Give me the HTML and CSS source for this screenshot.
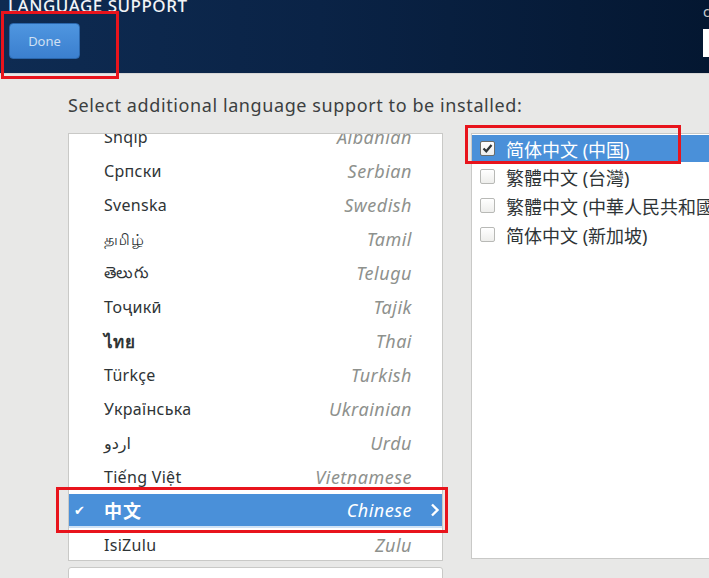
FILE: index.html
```html
<!DOCTYPE html>
<html lang="en">

<head>
    <meta charset="UTF-8">
    <title>Language Support</title>
    <link rel="stylesheet" href="styles.css">
</head>

<body>

    <header class="topbar">
        <div class="topbar-left">
            <h1 class="title">LANGUAGE SUPPORT</h1>
            <button class="done">Done</button>
        </div>
        <div class="topbar-right">
            <span class="layout-name">cn</span>
            <span class="layout-box">cn</span>
        </div>
        <div class="mark mark-done"></div>
    </header>

    <main class="content">
        <p class="lead">Select additional language support to be installed:</p>

        <div class="columns">
            <div class="left">
                <div class="langlist">
                    <div class="rows">
                        <div class="row"><span class="native">Shqip</span><span class="english">Albanian</span></div>
                        <div class="row"><span class="native">Српски</span><span class="english">Serbian</span></div>
                        <div class="row"><span class="native">Svenska</span><span class="english">Swedish</span></div>
                        <div class="row"><span class="native">தமிழ்</span><span class="english">Tamil</span></div>
                        <div class="row"><span class="native">తెలుగు</span><span class="english">Telugu</span></div>
                        <div class="row"><span class="native">Тоҷикӣ</span><span class="english">Tajik</span></div>
                        <div class="row"><span class="native thai">ไทย</span><span class="english">Thai</span></div>
                        <div class="row"><span class="native">Türkçe</span><span class="english">Turkish</span></div>
                        <div class="row"><span class="native">Українська</span><span class="english">Ukrainian</span></div>
                        <div class="row"><span class="native">اردو</span><span class="english">Urdu</span></div>
                        <div class="row"><span class="native">Tiếng Việt</span><span class="english">Vietnamese</span></div>
                        <div class="row selected">
                            <span class="tick">&#10004;</span>
                            <span class="native">中文</span><span class="english">Chinese</span>
                            <svg class="chevron" width="10" height="14" viewBox="0 0 10 14"><path d="M2 1.5 L7.5 7 L2 12.5" fill="none" stroke="#ffffff" stroke-width="2.4"/></svg>
                        </div>
                        <div class="row"><span class="native">IsiZulu</span><span class="english">Zulu</span></div>
                    </div>
                </div>
                <div class="search"></div>
            </div>

            <div class="localelist">
                <div class="locale chosen">
                    <span class="box checked">
                        <svg width="11" height="11" viewBox="0 0 11 11"><path d="M1.5 5.5 L4.3 8.3 L9.5 2" fill="none" stroke="#2e3436" stroke-width="2.2"/></svg>
                    </span>
                    <span class="locale-name">简体中文 (中国)</span>
                </div>
                <div class="locale"><span class="box"></span><span class="locale-name">繁體中文 (台灣)</span></div>
                <div class="locale"><span class="box"></span><span class="locale-name">繁體中文 (中華人民共和國香港特別行政區)</span></div>
                <div class="locale"><span class="box"></span><span class="locale-name">简体中文 (新加坡)</span></div>
            </div>

            <div class="mark mark-row"></div>
            <div class="mark mark-locale"></div>
        </div>
    </main>

</body></html>
```

FILE: styles.css
```css
html,
body {
    margin: 0;
    width: 709px;
    height: 578px;
    overflow: hidden;
}

body {
    background-color: #e8e8e7;
    font-family: "Noto Sans", "DejaVu Sans", "Noto Sans CJK SC", sans-serif;
    color: #2e3436;
}

.topbar {
    position: relative;
    display: flex;
    height: 74px;
    background: linear-gradient(90deg, #0e2b52 0%, #0a2346 45%, #041731 100%);
    border-bottom: 1px solid #d6d6d6;
    box-sizing: border-box;
}

.topbar-left {
    display: flex;
    flex-direction: column;
    align-items: flex-start;
    padding-left: 8px;
}

.title {
    margin: -5px 0 0 0;
    font-size: 17px;
    line-height: 22px;
    font-weight: 500;
    color: #f2f4f7;
    letter-spacing: 0.5px;
}

.done {
    margin: 6px 0 0 1px;
    width: 71px;
    height: 36px;
    border: 1px solid #2a66ac;
    border-radius: 4px;
    background: linear-gradient(#4f96e0, #3b7fcf);
    color: #cfe0f3;
    font-family: "Noto Sans", sans-serif;
    font-size: 13px;
    padding: 0;
}

.topbar-right {
    margin-left: auto;
    margin-right: -30px;
    width: 36px;
    display: flex;
    flex-direction: column;
    padding-top: 2px;
}

.layout-name {
    color: #c8ccd2;
    font-size: 14px;
    line-height: 20px;
}

.layout-box {
    margin-top: 7px;
    height: 28px;
    width: 30px;
    border: 2px solid #ffffff;
    background-color: #ffffff;
    color: #2e3436;
    font-size: 14px;
    line-height: 24px;
    box-sizing: border-box;
    padding-left: 4px;
}

.mark {
    position: absolute;
    border: 3px solid #e8141c;
    box-sizing: border-box;
    pointer-events: none;
}

.mark-done {
    left: 1px;
    top: 11px;
    width: 118px;
    height: 68px;
}

.content {
    padding: 19px 0 0 68px;
}

.lead {
    margin: 0 0 16px 0;
    font-size: 18px;
    line-height: 24px;
    letter-spacing: 0.6px;
    color: #3c3f41;
}

.columns {
    position: relative;
    display: flex;
    gap: 28px;
}

.left {
    display: flex;
    flex-direction: column;
    gap: 6px;
    width: 375px;
}

.langlist {
    height: 428px;
    background-color: #ffffff;
    border: 1px solid #c9c9c7;
    box-sizing: border-box;
    overflow: hidden;
}

.rows {
    margin-top: -14px;
}

.row {
    position: relative;
    display: flex;
    align-items: center;
    height: 34px;
    padding: 0 30px 0 35px;
}

.native {
    font-size: 16px;
    letter-spacing: 0.3px;
    color: #2e3436;
}

.thai {
    font-weight: bold;
    font-size: 17px;
}

.english {
    margin-left: auto;
    font-size: 18px;
    font-style: italic;
    letter-spacing: 0.5px;
    color: #8e918d;
}

.selected {
    background-color: #4a90d9;
    border-bottom: 2px solid #cfe2f6;
    box-sizing: border-box;
}

.selected .native {
    color: #ffffff;
    font-weight: bold;
    font-size: 18px;
    letter-spacing: 1px;
}

.selected .english {
    color: #ffffff;
}

.tick {
    position: absolute;
    left: 5px;
    color: #ffffff;
    font-size: 13px;
}

.chevron {
    position: absolute;
    right: 2px;
}

.mark-row {
    left: -12px;
    top: 354px;
    width: 392px;
    height: 46px;
}

.search {
    height: 20px;
    background-color: #ffffff;
    border: 1px solid #c9c9c7;
    border-radius: 3px;
}

.localelist {
    flex: 1;
    height: 426px;
    background-color: #ffffff;
    border: 1px solid #c9c9c7;
    border-right: none;
    box-sizing: border-box;
    padding-top: 1px;
    overflow: hidden;
}

.locale {
    display: flex;
    align-items: center;
    height: 29px;
    padding-left: 8px;
    white-space: nowrap;
}

.chosen {
    background-color: #4a90d9;
    height: 27px;
}

.chosen .locale-name {
    color: #ffffff;
}

.box {
    display: flex;
    align-items: center;
    justify-content: center;
    width: 15px;
    height: 15px;
    border: 1px solid #b8b9b6;
    border-radius: 2px;
    background: linear-gradient(#ffffff, #eeeeec);
    box-sizing: border-box;
    margin-right: 11px;
    flex-shrink: 0;
}

.checked {
    border-color: #6b6d6a;
}

.locale-name {
    font-family: "Noto Sans", "Noto Sans CJK SC", sans-serif;
    font-size: 18px;
    color: #2e3436;
}

.mark-locale {
    left: 397px;
    top: -8px;
    width: 216px;
    height: 39px;
}
```
